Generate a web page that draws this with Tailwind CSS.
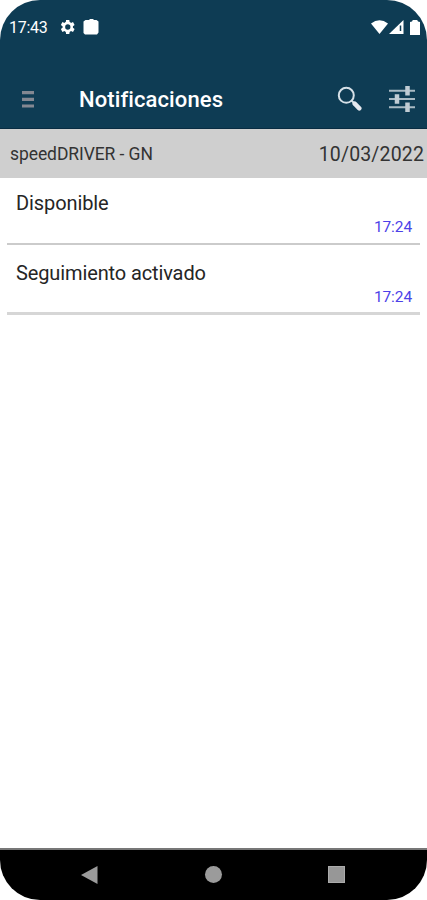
<!DOCTYPE html>
<html lang="es">
<head>
<meta charset="utf-8">
<title>Notificaciones</title>
<script src="https://cdn.jsdelivr.net/npm/@tailwindcss/browser@4"></script>
</head>
<body class="bg-white">
<div class="w-[427px] h-[900px] rounded-[40px] overflow-hidden bg-white flex flex-col font-['Roboto',sans-serif]">
  <div class="h-[54px] shrink-0 bg-[#0e3c54] text-white flex items-center pl-[9px] pr-[7px]">
    <span class="w-[50px] pt-[2px] text-[16px] leading-none tracking-[-0.3px] whitespace-nowrap">17:43</span>
    <svg class="w-4 h-4" viewBox="2 2 20 20" fill="#fff"><path d="M19.400 13a7.500 7.500 0 0 0 0-2l2.100-1.600-2-3.500-2.500 1a7.300 7.300 0 0 0-1.700-1l-.4-2.700h-4l-.4 2.700c-.6.2-1.200.6-1.700 1l-2.500-1-2 3.500L6.500 11a7.500 7.500 0 0 0 0 2l-2.200 1.600 2 3.500 2.500-1c.5.4 1.100.8 1.700 1l.4 2.700h4l.4-2.700c.6-.2 1.200-.6 1.700-1l2.500 1 2-3.500zM13 15.300a3.300 3.300 0 1 1 0-6.600 3.300 3.300 0 0 1 0 6.600z"/></svg>
    <svg class="ml-[8px] w-4 h-4" viewBox="0 0 16 16" fill="#fff"><path d="M2.500 1H6l1-1h3l1 1h2.500L15.500 2.500v11l-1.500 2H2L.5 14V2.500z"/></svg>
    <div class="ml-auto flex items-center gap-[1px]">
      <svg class="w-[17px] h-[14px]" viewBox="0 0 17 14" fill="#fff"><path d="M0 3.500Q8.500-3 17 3.500L8.500 14z"/></svg>
      <svg class="w-[15px] h-[14px]" viewBox="0 0 15 14"><path d="M0 14 14.500 0v14z" fill="#fff"/><path d="M11.500 5.500V11" stroke="#0e3c54" stroke-width="1.500"/></svg>
      <svg class="ml-[5px] w-[10px] h-[15px]" viewBox="0 0 10 15" fill="#fff"><path d="M0 2l2-.5.8-1.500h4.400L8 1.500l2 .5v13H0z"/></svg>
    </div>
  </div>
  <header class="h-[75px] shrink-0 bg-[#0e3c54] border-b border-[#082c42] flex items-center pt-[15px] pl-[22px] pr-[12px]">
    <svg class="mt-[2px] w-[12px] h-[17px]" viewBox="0 0 12 17" fill="#838892"><path d="M0 0h12v3.200H0zM0 6.700h12v3.200H0zM0 13.400h12v3.200H0z"/></svg>
    <h1 class="ml-[45px] pt-[3px] text-[22px] leading-none font-medium text-white tracking-[0.1px]">Notificaciones</h1>
    <div class="ml-auto -mt-[1px] flex items-center gap-[27px]">
      <svg class="w-[25px] h-[25px]" viewBox="0 0 25 25" fill="none" stroke="#d6e0e7"><circle cx="9.300" cy="9.300" r="7.500" stroke-width="2"/><path d="M14.500 14.500 17.500 17.500" stroke-width="2"/><path d="M17.700 17.700 22.300 22.300" stroke="#e5e8ee" stroke-width="4.500" stroke-linecap="round"/></svg>
      <svg class="w-[26px] h-[27px]" viewBox="0 0 26 27"><path d="M0 5.800h26M0 14h26M0 22.200h26" stroke="#a9bac4" stroke-width="2"/><path d="M18.500 1v9.500M8 9.300v9.500M18.500 17.500V27" stroke="#c0ccd4" stroke-width="4.500"/></svg>
    </div>
  </header>
  <div class="h-[49px] shrink-0 bg-[#cfcfcf] flex items-center justify-between pl-[10px] pr-[3px] text-[#333]">
    <span class="pt-[2px] text-[17.500px] leading-none tracking-[-0.08px]">speedDRIVER - GN</span>
    <span class="pt-[2px] text-[19.500px] leading-none tracking-[0.15px]">10/03/2022</span>
  </div>
  <main class="flex-1 flex flex-col px-[7px]">
    <div class="h-[67px] border-b-2 border-[#cbcbcb] pt-[14px] pl-[9px] pr-[8px]">
      <p class="text-[20px] leading-[22px] tracking-[-0.1px] text-[#252525]">Disponible</p>
      <p class="text-right text-[15.500px] leading-[18px] tracking-[-0.1px] text-[#4c42e8] pt-[4px]">17:24</p>
    </div>
    <div class="h-[70px] border-b-[3px] border-[#d6d6d6] pt-[17px] pl-[9px] pr-[8px]">
      <p class="text-[20px] leading-[22px] tracking-[-0.12px] text-[#252525]">Seguimiento activado</p>
      <p class="text-right text-[15.500px] leading-[18px] tracking-[-0.1px] text-[#4c42e8] pt-[4px]">17:24</p>
    </div>
  </main>
  <nav class="h-[52px] shrink-0 bg-black border-t-2 border-[#777] pb-[1px] grid grid-cols-[81px_17px_107px_17px_106px_17px] items-center">
    <svg class="col-start-2 w-[17px] h-[18px]" viewBox="0 0 17 18" fill="#9b9b9b"><path d="M0 9 16.500 0v18z"/></svg>
    <div class="col-start-4 w-[17px] h-[17px] rounded-full bg-[#9b9b9b]"></div>
    <div class="col-start-6 w-[17px] h-[17px] bg-[#979797] border border-[#ababab]"></div>
  </nav>
</div>
</body>
</html>
